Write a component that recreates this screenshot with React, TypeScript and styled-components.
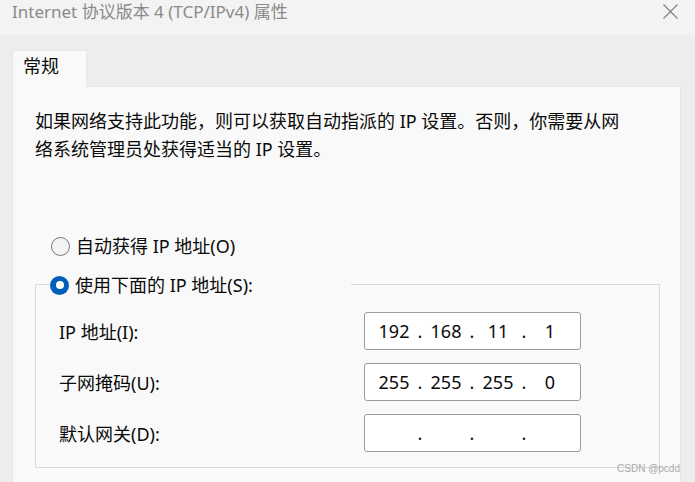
import React from "react";
import styled, { createGlobalStyle } from "styled-components";

const GlobalStyle = createGlobalStyle`
  html, body { margin: 0; padding: 0; background: #ededed; }
  body {
    font-family: "Noto Sans", "Noto Sans CJK SC", sans-serif;
    color: #0a0a0a;
  }
  * { box-sizing: border-box; }
`;

const Window = styled.div`
  position: relative;
  width: 695px;
  height: 482px;
  overflow: hidden;
  display: flex;
  flex-direction: column;
  background: #ededed;
`;

const TitleBar = styled.div`
  height: 35px;
  flex: none;
  background: #f3f3f3;
  display: flex;
  justify-content: space-between;
  align-items: flex-start;
  padding: 0 17px 0 12px;
`;

const Title = styled.div`
  font-size: 17px;
  line-height: 24px;
  color: #8a8a8a;
  white-space: nowrap;
`;

const CloseButton = styled.div`
  width: 15px;
  height: 15px;
  margin-top: 4px;
  display: flex;
`;

const Body = styled.div`
  flex: 1;
  display: flex;
  flex-direction: column;
  padding: 15px 14px 0 12px;
`;

const TabStrip = styled.div`
  display: flex;
  position: relative;
  z-index: 1;
  margin-bottom: -1px;
`;

const Tab = styled.div`
  width: 75px;
  height: 37px;
  background: #f9f9f9;
  border: 1px solid #e6e6e6;
  border-bottom: none;
  padding-left: 10px;
  font-size: 18px;
  line-height: 31px;
`;

const Panel = styled.div`
  flex: 1;
  background: #f9f9f9;
  border: 1px solid #e6e6e6;
  border-bottom: none;
  padding: 20px 20px 0 22px;
  display: flex;
  flex-direction: column;
`;

const Description = styled.p`
  margin: 0;
  font-size: 18px;
  line-height: 28px;
  white-space: nowrap;
`;

const RadioRow = styled.label<{ $top?: number }>`
  display: flex;
  align-items: center;
  height: 28px;
  gap: 6px;
  font-size: 18px;
  white-space: nowrap;
  margin-top: ${(p) => p.$top ?? 0}px;
  padding-left: ${(p) => (p.$top !== undefined ? 16 : 0)}px;
`;

const RadioDot = styled.span<{ $checked?: boolean }>`
  width: 19px;
  height: 19px;
  border-radius: 50%;
  flex: none;
  margin-top: 2px;
  display: flex;
  align-items: center;
  justify-content: center;
  background: ${(p) => (p.$checked ? "#005fb8" : "#f4f4f4")};
  border: ${(p) => (p.$checked ? "none" : "1.5px solid #7a7a7a")};
  &::after {
    content: "";
    display: ${(p) => (p.$checked ? "block" : "none")};
    width: 8px;
    height: 8px;
    border-radius: 50%;
    background: #ffffff;
  }
`;

const Group = styled.fieldset`
  margin: 11px 0 0 0;
  padding: 14px 0 15px 0;
  border: 1px solid #dadada;
  min-width: 0;
`;

const Legend = styled.legend`
  width: 301px;
  height: 28px;
  padding: 0;
  margin-left: 14px;
`;

const FieldGrid = styled.div`
  display: grid;
  grid-template-columns: 305px 217px;
  grid-auto-rows: 38px;
  row-gap: 13px;
  align-items: center;
  padding-left: 23px;
`;

const FieldLabel = styled.div`
  font-size: 18px;
  white-space: nowrap;
`;

const IpBox = styled.div`
  height: 38px;
  background: #ffffff;
  border: 1px solid #9c9c9c;
  border-radius: 3px;
  display: flex;
  align-items: center;
  padding-left: 7px;
  font-size: 18px;
`;

const Octet = styled.span`
  width: 44px;
  text-align: center;
`;

const Dot = styled.span`
  width: 8px;
  text-align: center;
`;

const Watermark = styled.div`
  position: absolute;
  right: 15px;
  bottom: 8px;
  font-family: "Liberation Sans", sans-serif;
  font-size: 10px;
  color: #a8a8a8;
`;

const IpField = ({ value }: { value: string[] }) => (
  <IpBox>
    {value.map((v, i) => (
      <React.Fragment key={i}>
        {i > 0 && <Dot>.</Dot>}
        <Octet>{v}</Octet>
      </React.Fragment>
    ))}
  </IpBox>
);

export default function App() {
  return (
    <>
      <GlobalStyle />
      <Window>
        <TitleBar>
          <Title>Internet 协议版本 4 (TCP/IPv4) 属性</Title>
          <CloseButton>
            <svg width="15" height="15" viewBox="0 0 15 15">
              <path d="M0.5 0.5 L14.5 14.5 M14.5 0.5 L0.5 14.5" stroke="#7e7e7e" strokeWidth="1.1" fill="none" />
            </svg>
          </CloseButton>
        </TitleBar>
        <Body>
          <TabStrip>
            <Tab>常规</Tab>
          </TabStrip>
          <Panel>
            <Description>
              如果网络支持此功能，则可以获取自动指派的 IP 设置。否则，你需要从网
              <br />
              络系统管理员处获得适当的 IP 设置。
            </Description>
            <RadioRow $top={68}>
              <RadioDot />
              自动获得 IP 地址(O)
            </RadioRow>
            <Group>
              <Legend>
                <RadioRow>
                  <RadioDot $checked />
                  使用下面的 IP 地址(S):
                </RadioRow>
              </Legend>
              <FieldGrid>
                <FieldLabel>IP 地址(I):</FieldLabel>
                <IpField value={["192", "168", "11", "1"]} />
                <FieldLabel>子网掩码(U):</FieldLabel>
                <IpField value={["255", "255", "255", "0"]} />
                <FieldLabel>默认网关(D):</FieldLabel>
                <IpField value={["", "", "", ""]} />
              </FieldGrid>
            </Group>
          </Panel>
        </Body>
        <Watermark>CSDN @pcdd</Watermark>
      </Window>
    </>
  );
}
